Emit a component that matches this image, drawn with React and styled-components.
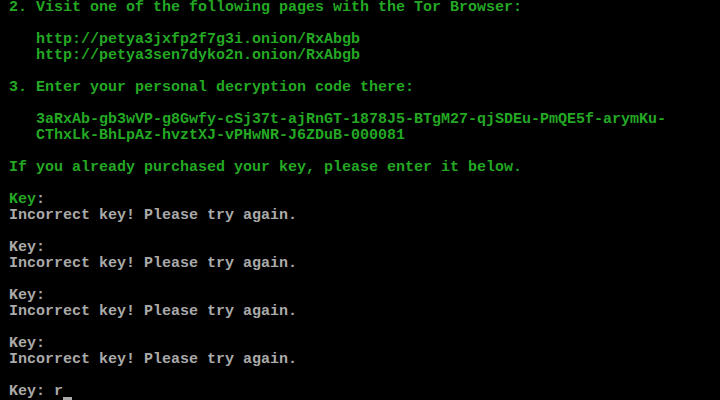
import React from "react";
import styled, { createGlobalStyle } from "styled-components";

const GREEN = "#24a824";
const GRAY = "#aaaaaa";

const GlobalStyle = createGlobalStyle`
  html, body {
    margin: 0;
    padding: 0;
    background: #000;
  }
`;

const Screen = styled.div`
  width: 720px;
  height: 400px;
  overflow: hidden;
  background: #000;
  display: flex;
  flex-direction: column;
  font-family: "Liberation Mono", "DejaVu Sans Mono", monospace;
  font-size: 15px;
  font-weight: bold;
  line-height: 16px;
`;

const Line = styled.div`
  height: 16px;
  white-space: pre;
  color: ${(p) => (p.$tone === "gray" ? GRAY : GREEN)};
`;

const Dim = styled.span`
  color: ${GRAY};
`;

const Cursor = styled.span`
  display: inline-block;
  width: 9px;
  height: 16px;
  vertical-align: top;
  border-bottom: 3px solid ${GRAY};
  box-sizing: border-box;
`;

const attempts = [1, 2, 3];

function App() {
  return (
    <Screen>
      <GlobalStyle />
      <Line> 2. Visit one of the following pages with the Tor Browser:</Line>
      <Line />
      <Line>    http://petya3jxfp2f7g3i.onion/RxAbgb</Line>
      <Line>    http://petya3sen7dyko2n.onion/RxAbgb</Line>
      <Line />
      <Line> 3. Enter your personal decryption code there:</Line>
      <Line />
      <Line>    3aRxAb-gb3wVP-g8Gwfy-cSj37t-ajRnGT-1878J5-BTgM27-qjSDEu-PmQE5f-arymKu-</Line>
      <Line>    CThxLk-BhLpAz-hvztXJ-vPHwNR-J6ZDuB-000081</Line>
      <Line />
      <Line> If you already purchased your key, please enter it below.</Line>
      <Line />
      <Line>
        {" Key"}
        <Dim>:</Dim>
      </Line>
      <Line $tone="gray"> Incorrect key! Please try again.</Line>
      {attempts.map((n) => (
        <React.Fragment key={n}>
          <Line />
          <Line $tone="gray"> Key:</Line>
          <Line $tone="gray"> Incorrect key! Please try again.</Line>
        </React.Fragment>
      ))}
      <Line />
      <Line $tone="gray">
        {" Key: r"}
        <Cursor />
      </Line>
    </Screen>
  );
}

export default App;
